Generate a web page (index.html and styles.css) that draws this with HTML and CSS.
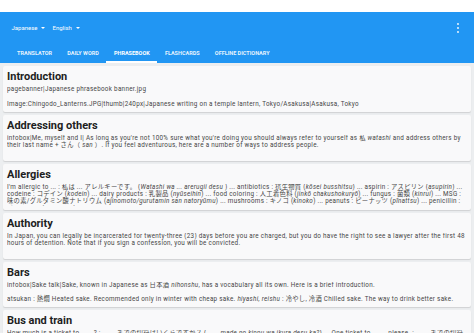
FILE: index.html
```html
<!DOCTYPE html>
<html>
<head>
    <meta charset="UTF-8">
    <link rel="stylesheet" href="styles.css">
</head>
<body>
    <div class="status-strip"></div>

    <!-- Üst Bar -->
    <header class="app-bar">
        <div class="toolbar">
            <div class="spinner">Japanese <span class="caret"></span></div>
            <div class="spinner">English <span class="caret"></span></div>
            <div class="spacer"></div>
            <svg class="kebab" width="4" height="12" viewBox="0 0 4 12">
                <circle cx="2" cy="2" r="0.9" fill="#fff"/>
                <circle cx="2" cy="6" r="0.9" fill="#fff"/>
                <circle cx="2" cy="10" r="0.9" fill="#fff"/>
            </svg>
        </div>
        <nav class="tabs">
            <div class="tab">Translator</div>
            <div class="tab">Daily word</div>
            <div class="tab active">Phrasebook</div>
            <div class="tab">Flashcards</div>
            <div class="tab">Offline dictionary</div>
        </nav>
    </header>

    <!-- Konular -->
    <main class="topic-list">
        <div class="card">
            <h3>Introduction</h3>
            <div class="card-body">
                <p>pagebanner|Japanese phrasebook banner.jpg</p>
                <p>Image:Chingodo_Lanterns.JPG|thumb|240px|Japanese writing on a temple lantern, Tokyo/Asakusa|Asakusa, Tokyo</p>
            </div>
        </div>

        <div class="card">
            <h3>Addressing others</h3>
            <div class="card-body">
                <p>infobox|Me, myself and I| As long as you're not 100% sure what you're doing you should always refer to yourself as 私 <i>watashi</i> and address others by their last name + さん（ <i>san</i> ）. If you feel adventurous, here are a number of ways to address people.</p>
            </div>
        </div>

        <div class="card">
            <h3>Allergies</h3>
            <div class="card-body">
                <p>I'm allergic to ... : 私は ... アレルギーです。 (<i>Watashi wa ... arerugii desu</i> ) ... antibiotics : 抗生物質 (<i>kōsei busshitsu</i>) ... aspirin : アスピリン (<i>asupirin</i>) ... codeine : コデイン (<i>kodein</i>) ... dairy products : 乳製品 (<i>nyūseihin</i>) ... food coloring : 人工着色料 (<i>jinkō chakushokuryō</i>) ... fungus : 菌類 (<i>kinrui</i>) ... MSG : 味の素/グルタミン酸ナトリウム (<i>ajinomoto/gurutamin san natoryūmu</i>) ... mushrooms : キノコ (<i>kinoko</i>) ... peanuts : ピーナッツ (<i>pīnattsu</i>) ... penicillin : ペニシリン (<i>penishirin</i>) ...</p>
            </div>
        </div>

        <div class="card">
            <h3>Authority</h3>
            <div class="card-body">
                <p>In Japan, you can legally be incarcerated for twenty-three (23) days before you are charged, but you do have the right to see a lawyer after the first 48 hours of detention. Note that if you sign a confession, you will be convicted.</p>
            </div>
        </div>

        <div class="card">
            <h3>Bars</h3>
            <div class="card-body">
                <p>infobox|Sake talk|Sake, known in Japanese as 日本酒 <i>nihonshu</i>, has a vocabulary all its own. Here is a brief introduction.</p>
                <p>atsukan : 熱燗 Heated sake. Recommended only in winter with cheap sake. <i>hiyashi, reishu</i> : 冷やし, 冷酒 Chilled sake. The way to drink better sake.</p>
            </div>
        </div>

        <div class="card">
            <h3>Bus and train</h3>
            <div class="card-body">
                <p>How much is a ticket to ____? : ____ までの切符はいくらですか？ (<i>____ made no kippu wa ikura desu ka?</i>) ... One ticket to ____, please. : ____ までの切符を一枚ください。 (<i>____ made no kippu o ichimai kudasai</i>) ...</p>
            </div>
        </div>
    </main>
</body>
</html>
```

FILE: styles.css
```css
/* Temel */
body {
    margin: 0;
    font-family: Roboto, "Noto Sans CJK JP", sans-serif;
    background-color: #eceef0;
    overflow: hidden;
}

.status-strip {
    height: 12px;
    background-color: #ffffff;
}

/* Üst Bar */
.app-bar {
    background-color: #2196f3;
    color: #ffffff;
}

.toolbar {
    display: flex;
    align-items: center;
    height: 31px;
    padding: 0 12px 0 11.5px;
    font-size: 6px;
}

.spinner {
    display: flex;
    align-items: center;
    margin-right: 7px;
}

.caret {
    width: 0;
    height: 0;
    margin-left: 4px;
    border-left: 2px solid transparent;
    border-right: 2px solid transparent;
    border-top: 2px solid #ffffff;
}

.spacer {
    flex: 1;
}

.kebab {
    margin-right: 2px;
}

/* Sekmeler */
.tabs {
    display: flex;
    height: 20px;
    padding-left: 9.5px;
}

.tab {
    display: flex;
    align-items: center;
    padding: 2px 7.6px 0 7.6px;
    font-size: 5.5px;
    font-weight: bold;
    text-transform: uppercase;
    color: rgba(255, 255, 255, 0.9);
    border-bottom: 2px solid transparent;
    box-sizing: border-box;
}

.tab.active {
    color: #ffffff;
    border-bottom-color: #ffffff;
}

/* Kartlar */
.topic-list {
    display: flex;
    flex-direction: column;
    gap: 3px;
    padding: 3px 3px 0 3px;
}

.card {
    background-color: #f9f9fa;
    border-radius: 2px;
    box-shadow: 0 1px 1px rgba(0, 0, 0, 0.12);
    padding: 4px 4px 4px 4px;
}

.card h3 {
    margin: 0;
    font-size: 11px;
    line-height: 14px;
    font-weight: bold;
    color: #1e1e1e;
}

.card-body {
    margin-top: 2px;
    height: 21.9px;
    overflow: hidden;
    font-size: 6.3px;
    line-height: 7.3px;
    letter-spacing: 0.29px;
    color: #464646;
}

.card-body p {
    margin: 0 0 7.3px 0;
}
```
